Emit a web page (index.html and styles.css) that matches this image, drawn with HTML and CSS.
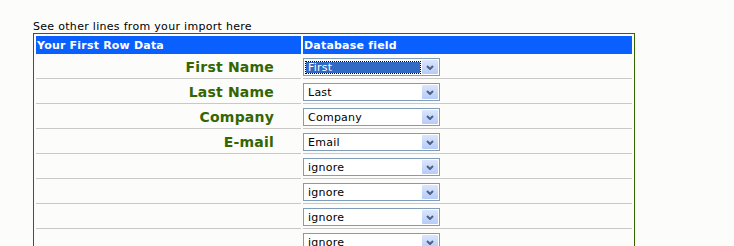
FILE: index.html
```html
<!DOCTYPE html>
<html lang="en">

<head>
    <meta charset="UTF-8">
    <title>Import Mapping</title>
    <link rel="stylesheet" href="styles.css">
</head>

<body>
    <div class="page">
        <p class="intro">See other lines from your import here</p>
        <table class="mapping">
            <thead>
                <tr>
                    <th class="col-data">Your First Row Data</th>
                    <th class="col-field">Database field</th>
                </tr>
            </thead>
            <tbody>
                <tr>
                    <td class="label">First Name</td>
                    <td>
                        <div class="select focused">
                            <span class="select-text">First</span>
                            <span class="select-btn"><svg width="8" height="5" viewBox="0 0 8 5"><path d="M1 1 L4 4 L7 1" fill="none" stroke="#4d6185" stroke-width="2"/></svg></span>
                        </div>
                    </td>
                </tr>
                <tr>
                    <td class="label">Last Name</td>
                    <td>
                        <div class="select">
                            <span class="select-text">Last</span>
                            <span class="select-btn"><svg width="8" height="5" viewBox="0 0 8 5"><path d="M1 1 L4 4 L7 1" fill="none" stroke="#4d6185" stroke-width="2"/></svg></span>
                        </div>
                    </td>
                </tr>
                <tr>
                    <td class="label">Company</td>
                    <td>
                        <div class="select">
                            <span class="select-text">Company</span>
                            <span class="select-btn"><svg width="8" height="5" viewBox="0 0 8 5"><path d="M1 1 L4 4 L7 1" fill="none" stroke="#4d6185" stroke-width="2"/></svg></span>
                        </div>
                    </td>
                </tr>
                <tr>
                    <td class="label">E-mail</td>
                    <td>
                        <div class="select">
                            <span class="select-text">Email</span>
                            <span class="select-btn"><svg width="8" height="5" viewBox="0 0 8 5"><path d="M1 1 L4 4 L7 1" fill="none" stroke="#4d6185" stroke-width="2"/></svg></span>
                        </div>
                    </td>
                </tr>
                <tr>
                    <td class="label"></td>
                    <td>
                        <div class="select">
                            <span class="select-text">ignore</span>
                            <span class="select-btn"><svg width="8" height="5" viewBox="0 0 8 5"><path d="M1 1 L4 4 L7 1" fill="none" stroke="#4d6185" stroke-width="2"/></svg></span>
                        </div>
                    </td>
                </tr>
                <tr>
                    <td class="label"></td>
                    <td>
                        <div class="select">
                            <span class="select-text">ignore</span>
                            <span class="select-btn"><svg width="8" height="5" viewBox="0 0 8 5"><path d="M1 1 L4 4 L7 1" fill="none" stroke="#4d6185" stroke-width="2"/></svg></span>
                        </div>
                    </td>
                </tr>
                <tr>
                    <td class="label"></td>
                    <td>
                        <div class="select">
                            <span class="select-text">ignore</span>
                            <span class="select-btn"><svg width="8" height="5" viewBox="0 0 8 5"><path d="M1 1 L4 4 L7 1" fill="none" stroke="#4d6185" stroke-width="2"/></svg></span>
                        </div>
                    </td>
                </tr>
                <tr>
                    <td class="label"></td>
                    <td>
                        <div class="select">
                            <span class="select-text">ignore</span>
                            <span class="select-btn"><svg width="8" height="5" viewBox="0 0 8 5"><path d="M1 1 L4 4 L7 1" fill="none" stroke="#4d6185" stroke-width="2"/></svg></span>
                        </div>
                    </td>
                </tr>
            </tbody>
        </table>
    </div>
</body>

</html>
```

FILE: styles.css
```css
html {
    overflow: hidden;
}

body {
    font-family: "DejaVu Sans", Verdana, sans-serif;
    margin: 0;
    padding: 0;
    background-color: #fcfcfb;
    color: #000;
}

.page {
    padding: 20px 0 0 33px;
}

.intro {
    margin: 0;
    padding-top: 1px;
    font-size: 11px;
    line-height: 12px;
    letter-spacing: 0.3px;
}

.mapping {
    width: 602px;
    border: 1px solid #336600;
    border-collapse: separate;
    border-spacing: 2px;
}

.mapping th {
    height: 18px;
    padding: 0 0 0 1px;
    background-color: #0a5fff;
    color: #fff;
    font-size: 11px;
    font-weight: bold;
    letter-spacing: 0.2px;
    text-align: left;
    vertical-align: middle;
}

.col-data {
    width: 264px;
}

.mapping td {
    height: 22px;
    padding: 0;
    border-bottom: 1px solid #c8c8c8;
    vertical-align: middle;
}

.mapping td.label {
    padding-right: 27px;
    text-align: right;
    color: #336600;
    font-size: 14px;
    font-weight: bold;
    letter-spacing: 0.2px;
}

.select {
    width: 137px;
    height: 18px;
    box-sizing: border-box;
    border: 1px solid #7f9db9;
    background-color: #fff;
    display: flex;
    align-items: center;
    font-size: 11px;
    letter-spacing: 0.25px;
}

.select-text {
    flex: 1;
    padding-left: 4px;
    padding-top: 1px;
    line-height: 14px;
}

.select.focused .select-text {
    margin: 0 2px 0 2px;
    padding-left: 2px;
    padding-top: 0;
    height: 11px;
    line-height: 11px;
    background-color: #316ac5;
    color: #fff;
    outline: 1px dotted #000;
}

.select-btn {
    width: 16px;
    height: 14px;
    margin-right: 1px;
    background: linear-gradient(#dbe6fd, #b6cbf7);
    border-radius: 1px;
    display: flex;
    align-items: center;
    justify-content: center;
}
```
